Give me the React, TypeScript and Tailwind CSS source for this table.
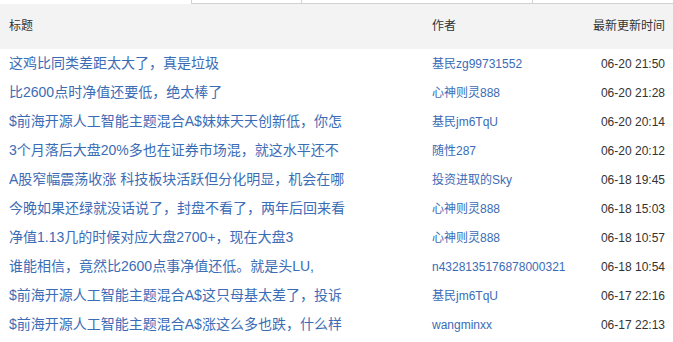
const rows = [
  { title: "这鸡比同类差距太大了，真是垃圾", author: "基民zg99731552", time: "06-20 21:50" },
  { title: "比2600点时净值还要低，绝太棒了", author: "心神则灵888", time: "06-20 21:28" },
  { title: "$前海开源人工智能主题混合A$妹妹天天创新低，你怎", author: "基民jm6TqU", time: "06-20 20:14" },
  { title: "3个月落后大盘20%多也在证券市场混，就这水平还不", author: "随性287", time: "06-20 20:12" },
  { title: "A股窄幅震荡收涨 科技板块活跃但分化明显，机会在哪", author: "投资进取的Sky", time: "06-18 19:45" },
  { title: "今晚如果还绿就没话说了，封盘不看了，两年后回来看", author: "心神则灵888", time: "06-18 15:03" },
  { title: "净值1.13几的时候对应大盘2700+，现在大盘3", author: "心神则灵888", time: "06-18 10:57" },
  { title: "谁能相信，竟然比2600点事净值还低。就是头LU,", author: "n4328135176878000321", time: "06-18 10:54" },
  { title: "$前海开源人工智能主题混合A$这只母基太差了，投诉", author: "基民jm6TqU", time: "06-17 22:16" },
  { title: "$前海开源人工智能主题混合A$涨这么多也跌，什么样", author: "wangminxx", time: "06-17 22:13" },
];

export default function App() {
  return (
    <div className="w-[673px] h-[342px] bg-white overflow-hidden font-['Liberation_Sans','Noto_Sans_CJK_SC',sans-serif]">
      <div className="flex h-[4px]">
        <div className="w-[191px]" />
        <div className="w-[110px] border-l border-b border-[#d2d2d2]" />
        <div className="w-[231px] border-l border-b border-[#d2d2d2]" />
        <div className="flex-1 border-l border-b border-[#d2d2d2]" />
      </div>
      <div className="flex items-center h-[45px] bg-[#f3f3f3] text-[12px] text-[#333] pb-[1px]">
        <div className="w-[432px] pl-[9px]">标题</div>
        <div className="flex-1">作者</div>
        <div className="pr-[8px] text-right">最新更新时间</div>
      </div>
      {rows.map((r, i) => (
        <div key={i} className="flex items-center h-[29px]">
          <div className="w-[432px] pl-[9px]">
            <div className="w-[336px] overflow-hidden whitespace-nowrap text-[14px] text-[#3b6cb6]">{r.title}</div>
          </div>
          <div className="flex-1 text-[12px] text-[#3b6cb6] whitespace-nowrap">{r.author}</div>
          <div className="pr-[8px] text-right text-[12px] text-[#333] whitespace-nowrap">{r.time}</div>
        </div>
      ))}
    </div>
  );
}
